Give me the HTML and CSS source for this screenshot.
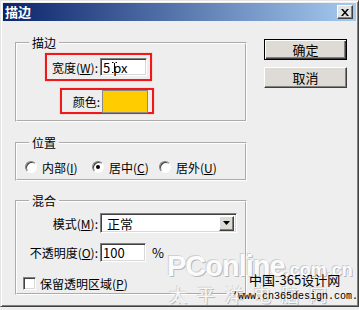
FILE: index.html
```html
<!DOCTYPE html>
<html lang="zh-CN">
<head>
    <meta charset="UTF-8">
    <title>描边</title>
    <link rel="stylesheet" href="styles.css">
</head>
<body>
    <div class="window">
        <div class="titlebar">
            <span class="title">描边</span>
            <span class="close">
                <svg width="8" height="7" viewBox="0 0 8 7"><path d="M0 0h2l2 2.5L6 0h2L5 3.5 8 7H6L4 4.5 2 7H0l3-3.5z" fill="#000"/></svg>
            </span>
        </div>
        <div class="content">
            <div class="groups">
                <fieldset class="group group-stroke">
                    <legend>描边</legend>
                    <div class="mark mark-width">
                        <label>宽度(<u>W</u>):</label>
                        <span class="field field-width">5 px<svg class="ibeam" width="5" height="11" viewBox="0 0 5 11"><path d="M0 0.5h1.5M3.5 0.5H5M2.5 1v9M0 10.5h1.5M3.5 10.5H5" stroke="#000" fill="none"/></svg></span>
                    </div>
                    <div class="mark mark-color">
                        <label>颜色:</label>
                        <span class="swatch"></span>
                    </div>
                </fieldset>
                <fieldset class="group group-pos">
                    <legend>位置</legend>
                    <div class="radios">
                        <span class="radio-item"><span class="radio"></span><span>内部(<u>I</u>)</span></span>
                        <span class="radio-item"><span class="radio checked"></span><span>居中(<u>C</u>)</span></span>
                        <span class="radio-item"><span class="radio"></span><span>居外(<u>U</u>)</span></span>
                    </div>
                </fieldset>
                <fieldset class="group group-blend">
                    <legend>混合</legend>
                    <div class="row">
                        <label class="row-label">模式(<u>M</u>):</label>
                        <span class="select"><span>正常</span><span class="select-btn"><svg width="7" height="4" viewBox="0 0 7 4"><path d="M0 0h7L3.5 4z" fill="#000"/></svg></span></span>
                    </div>
                    <div class="row row-opacity">
                        <label class="row-label">不透明度(<u>O</u>):</label>
                        <span class="field field-opacity">100</span>
                        <span class="unit">%</span>
                    </div>
                    <div class="check-row"><span class="check"></span><span>保留透明区域(<u>P</u>)</span></div>
                </fieldset>
            </div>
            <div class="buttons">
                <button class="btn btn-default">确定</button>
                <button class="btn">取消</button>
            </div>
        </div>
        <div class="wm-logo">PConline<span class="wm-dom">.com.cn</span></div>
        <div class="wm-cn">太平洋电脑网</div>
        <div class="wm-site">中国-365设计网</div>
        <div class="wm-url">‘www.cn365design.com.</div>
    </div>
</body>
</html>
```

FILE: styles.css
```css
body {
    margin: 0;
    background-color: #eeeeee;
    font-family: "Noto Sans CJK SC", sans-serif;
    font-size: 12px;
    color: #000;
}
.window {
    position: relative;
    box-sizing: border-box;
    width: 359px;
    height: 307px;
    padding: 2px;
    border: 1px solid;
    border-color: #e4e4e4 #404040 #404040 #e4e4e4;
    box-shadow: inset 1px 1px 0 #fff, inset -1px -1px 0 #808080;
    background-color: #eeeeee;
    overflow: hidden;
}
.titlebar {
    height: 18px;
    display: flex;
    align-items: center;
    justify-content: space-between;
    padding: 0 3px 0 2px;
    background: linear-gradient(to right, #0a246a, #a6caf0);
}
.title {
    color: #fff;
    font-weight: bold;
    font-size: 13px;
    line-height: 18px;
}
.close {
    box-sizing: border-box;
    width: 16px;
    height: 14px;
    display: flex;
    align-items: center;
    justify-content: center;
    background-color: #e2e2e2;
    border: 1px solid;
    border-color: #fff #404040 #404040 #fff;
    box-shadow: inset -1px -1px 0 #808080;
}
.content {
    display: flex;
    padding: 14px 0 0 12px;
}
.groups {
    width: 232px;
}
.group {
    margin: 0;
    padding: 0;
    border: 2px groove #fff;
    min-width: 0;
}
.group legend {
    margin-left: 12px;
    padding: 0 3px;
    line-height: 16px;
}
.group-stroke {
    padding: 2px 0 6px;
}
.group-pos {
    margin-top: 13px;
    padding: 9px 0 5px;
}
.group-blend {
    margin-top: 12px;
    padding: 4px 0 3px;
}
.mark {
    box-sizing: border-box;
    display: flex;
    align-items: center;
    justify-content: flex-end;
    border: 2px solid #f01818;
    box-shadow: 0 0 1px #ff8080;
}
.mark label {
    margin-right: 2px;
}
.mark-width {
    width: 107px;
    height: 28px;
    margin-left: 28px;
    padding-right: 3px;
}
.mark-color {
    width: 94px;
    height: 26px;
    margin-top: 7px;
    margin-left: 43px;
    padding-right: 4px;
}
.field {
    position: relative;
    box-sizing: border-box;
    display: flex;
    align-items: center;
    padding-left: 2px;
    background-color: #fff;
    border: 1px solid;
    border-color: #808080 #fff #fff #808080;
    box-shadow: inset 1px 1px 0 #404040, inset -1px -1px 0 #d8d8d8;
    font-size: 13px;
}
.field-width {
    width: 47px;
    height: 18px;
}
.ibeam {
    position: absolute;
    left: 11px;
    top: 3px;
}
.swatch {
    box-sizing: border-box;
    width: 46px;
    height: 23px;
    background-color: #ffcc00;
    border: 1px solid #8a8a8a;
}
.radios {
    display: flex;
    align-items: center;
    height: 14px;
    padding-left: 8px;
}
.radio-item {
    display: flex;
    align-items: center;
    gap: 5px;
    width: 67px;
}
.radio {
    box-sizing: border-box;
    width: 12px;
    height: 12px;
    border-radius: 50%;
    background-color: #fff;
    border: 1px solid;
    border-color: #808080 #fff #fff #808080;
    box-shadow: inset 1px 1px 0 #404040;
    position: relative;
}
.radio.checked::after {
    content: "";
    position: absolute;
    left: 3px;
    top: 3px;
    width: 4px;
    height: 4px;
    border-radius: 50%;
    background-color: #000;
}
.row {
    display: flex;
    align-items: center;
}
.row-opacity {
    margin-top: 10px;
}
.row-label {
    width: 81px;
    margin-right: 2px;
    text-align: right;
}
.select {
    box-sizing: border-box;
    width: 137px;
    height: 20px;
    display: flex;
    align-items: center;
    justify-content: space-between;
    padding: 0 2px 0 6px;
    background-color: #fff;
    border: 1px solid;
    border-color: #808080 #fff #fff #808080;
    box-shadow: inset 1px 1px 0 #404040, inset -1px -1px 0 #d8d8d8;
    font-size: 13px;
}
.select-btn {
    box-sizing: border-box;
    width: 15px;
    height: 15px;
    display: flex;
    align-items: center;
    justify-content: center;
    background-color: #dedbd6;
    border: 1px solid;
    border-color: #fff #404040 #404040 #fff;
    box-shadow: inset -1px -1px 0 #808080;
}
.field-opacity {
    width: 46px;
    height: 19px;
}
.unit {
    margin-left: 6px;
    font-size: 13px;
}
.check-row {
    display: flex;
    align-items: center;
    gap: 4px;
    height: 14px;
    margin-top: 14px;
    padding-left: 6px;
}
.check {
    box-sizing: border-box;
    width: 13px;
    height: 13px;
    background-color: #fff;
    border: 1px solid;
    border-color: #808080 #fff #fff #808080;
    box-shadow: inset 1px 1px 0 #404040, inset -1px -1px 0 #d8d8d8;
}
.buttons {
    display: flex;
    flex-direction: column;
    gap: 7px;
    margin: 4px 0 0 17px;
}
.btn {
    box-sizing: border-box;
    width: 83px;
    height: 21px;
    padding: 0;
    font-family: inherit;
    font-size: 13px;
    background-color: #dedbd6;
    border: 1px solid;
    border-color: #fff #404040 #404040 #fff;
    box-shadow: inset -1px -1px 0 #808080;
}
.btn-default {
    border-color: #000;
    box-shadow: inset 1px 1px 0 #fff, inset -1px -1px 0 #404040, inset -2px -2px 0 #808080;
}
.wm-logo {
    position: absolute;
    left: 166px;
    top: 249px;
    font-family: "Liberation Sans", sans-serif;
    font-size: 29px;
    font-weight: bold;
    letter-spacing: -1px;
    color: #fbfbfb;
    text-shadow: -1px -1px 0 #d0d0d0, 1px 1px 0 #b8b8b8;
}
.wm-dom {
    font-size: 18px;
    letter-spacing: 0;
}
.wm-cn {
    position: absolute;
    left: 168px;
    top: 282px;
    font-size: 18px;
    line-height: 22px;
    letter-spacing: 10px;
    color: #f8f8f8;
    text-shadow: -1px -1px 0 #d4d4d4, 1px 1px 0 #bcbcbc;
}
.wm-site {
    position: absolute;
    left: 248px;
    top: 269px;
    font-size: 13px;
}
.wm-url {
    position: absolute;
    left: 231px;
    top: 290px;
    font-family: "Liberation Mono", monospace;
    font-size: 10px;
}
```
